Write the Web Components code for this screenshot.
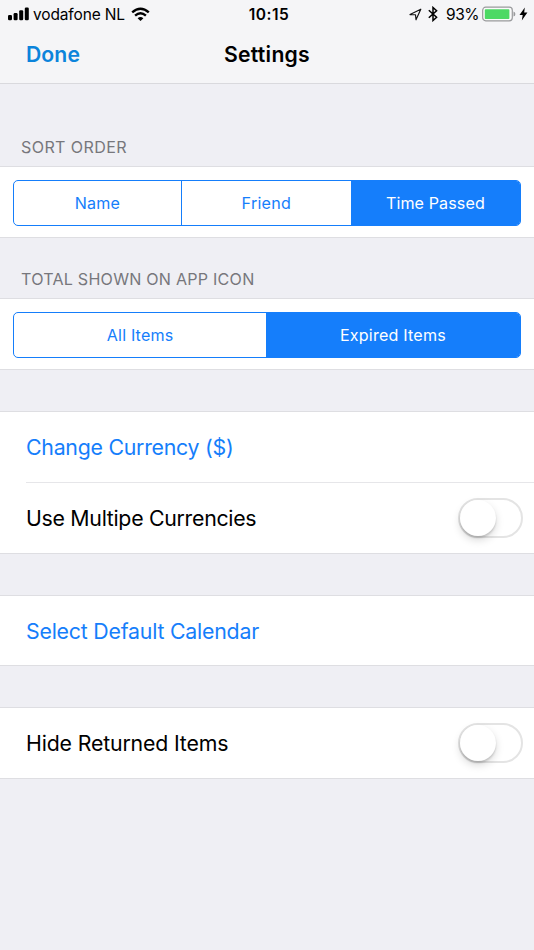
<!DOCTYPE html>
<html lang="en">
<head>
<meta charset="utf-8">
<title>Settings</title>
<style>
html, body { margin: 0; height: 100%; background: #efeff4; }
body { font-family: Inter, "Liberation Sans", sans-serif; color: #000; overflow: hidden; }
</style>
</head>
<body>
<settings-screen></settings-screen>
<script>
const define = (name, html, setup) => {
  const template = document.createElement('template');
  template.innerHTML = html;
  customElements.define(name, class extends HTMLElement {
    connectedCallback() {
      if (this.shadowRoot) return;
      this.attachShadow({ mode: 'open' }).append(template.content.cloneNode(true));
      if (setup) setup(this, this.shadowRoot);
    }
  });
};

// Text run tracked to a given advance width.
define('fit-text', `
  <style>:host { display: block; white-space: nowrap; flex: none; } span { display: inline-block; }</style>
  <span><slot></slot></span>`, (host, root) => {
  const span = root.querySelector('span');
  const want = Number(host.getAttribute('w'));
  const count = host.textContent.length;
  const natural = span.getBoundingClientRect().width;
  host.style.width = want + 'px';
  if (natural) span.style.letterSpacing = ((want - natural) / count).toFixed(3) + 'px';
});

define('status-bar', `
  <style>
    :host { display: grid; grid-template-columns: 1fr auto 1fr; align-items: center; height: 27px; font-size: 15.5px; line-height: 27px; }
    .left, .right { display: flex; align-items: center; height: 27px; }
    .left { padding-left: 8px; }
    .right { justify-content: flex-end; padding-right: 6px; }
    .time { font-weight: 600; padding: 1px 0 0 4px; }
    .label { padding-top: 1px; }
    svg { display: block; flex: none; }
  </style>
  <div class="left">
    <svg width="21" height="14" viewBox="0 0 21 14" style="margin-right:4px">
      <rect x="0" y="8" width="4" height="5.3" rx="1.2"/><rect x="5.6" y="6" width="4" height="7.3" rx="1.2"/>
      <rect x="11.2" y="3.3" width="4" height="10" rx="1.2"/><rect x="16.8" y=".6" width="4" height="12.7" rx="1.2"/>
    </svg>
    <fit-text class="label" w="92">vodafone NL</fit-text>
    <svg width="19" height="15" viewBox="0 0 19 15" style="margin-left:6px">
      <g fill="none" stroke="#000" stroke-width="2.4"><path d="M1.2 5.4 Q9.5 -2 17.8 5.4"/><path d="M4.1 8.7 Q9.5 3.9 14.9 8.7"/></g>
      <path d="M6.6 11.2 Q9.5 8.8 12.4 11.2 L9.5 14.1Z"/>
    </svg>
  </div>
  <fit-text class="time" w="40.5">10:15</fit-text>
  <div class="right">
    <svg width="13" height="13" viewBox="0 0 13 13" style="margin-right:6px"><path d="M1 6.6 L11.8 1.2 L7 11.8 L6.5 6.7Z" fill="none" stroke="#111" stroke-width="1.15" stroke-linejoin="round"/></svg>
    <svg width="10" height="16" viewBox="0 0 10 16" style="margin-right:8px"><path d="M.8 4.2 L8.6 11.3 L5 14.5 V1.5 L8.6 4.7 L.8 11.8" fill="none" stroke="#000" stroke-width="1.5"/></svg>
    <fit-text class="label" w="33">93%</fit-text>
    <svg width="34" height="16" viewBox="0 0 34 16" style="margin-left:3px">
      <rect x=".7" y="1.2" width="29.6" height="13.6" rx="3" fill="#fafafa" stroke="#999a9c" stroke-width="1.2"/>
      <rect x="2.8" y="3.2" width="24.6" height="9.8" rx=".8" fill="#4cd964"/>
      <path d="M31.5 5.5 Q33.4 6 33.4 8 Q33.4 10 31.5 10.5Z" fill="#999a9c"/>
    </svg>
    <svg width="9" height="14" viewBox="0 0 9 14" style="margin-left:3px"><path d="M5.8 .5 L.5 7.9 H3.7 L2.8 13.5 L8.4 5.6 H5.2Z"/></svg>
  </div>`);

define('nav-bar', `
  <style>
    :host { display: grid; grid-template-columns: 1fr auto 1fr; align-items: center; height: 55px; font-size: 21.2px; font-weight: 600; line-height: 55px; border-bottom: 1.5px solid #d9d9dd; box-sizing: border-box; padding-bottom: 2px; }
    .done { padding-left: 26px; color: #0b84db; }
  </style>
  <fit-text class="done" w="54">Done</fit-text><fit-text w="86">Settings</fit-text>`);

define('group-title', `
  <style>:host { display: block; height: 37px; line-height: 37px; padding-left: 21px; color: #77777c; font-size: 16.1px; }</style>
  <slot></slot>`);

define('table-group', `
  <style>:host { display: block; background: #fff; border-top: 1px solid #dedee2; border-bottom: 1px solid #dedee2; box-sizing: border-box; }</style>
  <slot></slot>`);

define('segmented-control', `
  <style>:host { display: flex; margin: 12.6px 13.2px 11.6px; height: 46px; box-sizing: border-box; border: 1.4px solid #157efb; border-radius: 5px; overflow: hidden; }</style>
  <slot></slot>`);

define('segment-item', `
  <style>
    :host { display: flex; flex: 1; align-items: center; justify-content: center; color: #157efb; font-size: 16.1px; }
    :host([divided]) { border-left: 1px solid #157efb; }
    :host([selected]) { background: #157efb; color: #fff; }
  </style>
  <slot></slot>`);

define('table-row', `
  <style>
    :host { display: flex; align-items: center; justify-content: space-between; height: 70px; box-sizing: border-box; margin-left: 26px; padding-right: 11px; font-size: 21.3px; }
    :host([action]) { color: #157efb; }
    :host([separated]) { height: 71px; border-top: 1px solid #e6e6e9; }
  </style>
  <slot></slot>`);

define('toggle-switch', `
  <style>
    :host { display: flex; align-items: center; width: 65.5px; height: 40px; box-sizing: border-box; border: 2px solid #e4e4e4; border-radius: 20px; background: #fff; }
    i { width: 36px; height: 36px; border-radius: 50%; background: #fff; box-shadow: 0 4px 8px rgba(0,0,0,.15), 0 2px 2px rgba(0,0,0,.15); }
  </style>
  <i></i>`);

define('settings-screen', `
  <style>
    :host { display: flex; flex-direction: column; height: 950px; background: #efeff4; }
    header { background: #f5f5f7; height: 84px; box-sizing: border-box; display: flex; flex-direction: column; flex: none; }
    nav-bar { flex: 1; }
    main { display: flex; flex-direction: column; }
    .first { margin-top: 45px; }
    .pad { height: 72px; }
    .gap { margin-top: 41px; }
    .short { height: 69px; }
    group-title { flex: none; box-sizing: border-box; }
  </style>
  <header><status-bar></status-bar><nav-bar></nav-bar></header>
  <main>
    <group-title class="first"><fit-text w="106">SORT ORDER</fit-text></group-title>
    <table-group class="pad">
      <segmented-control>
        <segment-item style="flex:0 0 166.5px"><fit-text w="45.5">Name</fit-text></segment-item>
        <segment-item divided><fit-text w="49.5">Friend</fit-text></segment-item>
        <segment-item selected style="flex:0 0 168.8px"><fit-text w="99">Time Passed</fit-text></segment-item>
      </segmented-control>
    </table-group>
    <group-title style="height:60px;padding-top:23px"><fit-text w="233.5">TOTAL SHOWN ON APP ICON</fit-text></group-title>
    <table-group class="pad">
      <segmented-control>
        <segment-item><fit-text w="66.5">All Items</fit-text></segment-item>
        <segment-item selected style="flex:0 0 253.8px"><fit-text w="106">Expired Items</fit-text></segment-item>
      </segmented-control>
    </table-group>
    <table-group class="gap">
      <table-row action><fit-text w="207.5">Change Currency ($)</fit-text></table-row>
      <table-row separated><fit-text w="230.3">Use Multipe Currencies</fit-text><toggle-switch></toggle-switch></table-row>
    </table-group>
    <table-group class="gap">
      <table-row action class="short"><fit-text w="233">Select Default Calendar</fit-text></table-row>
    </table-group>
    <table-group class="gap">
      <table-row><fit-text w="202.3">Hide Returned Items</fit-text><toggle-switch></toggle-switch></table-row>
    </table-group>
  </main>`);
</script>
</body>
</html>
